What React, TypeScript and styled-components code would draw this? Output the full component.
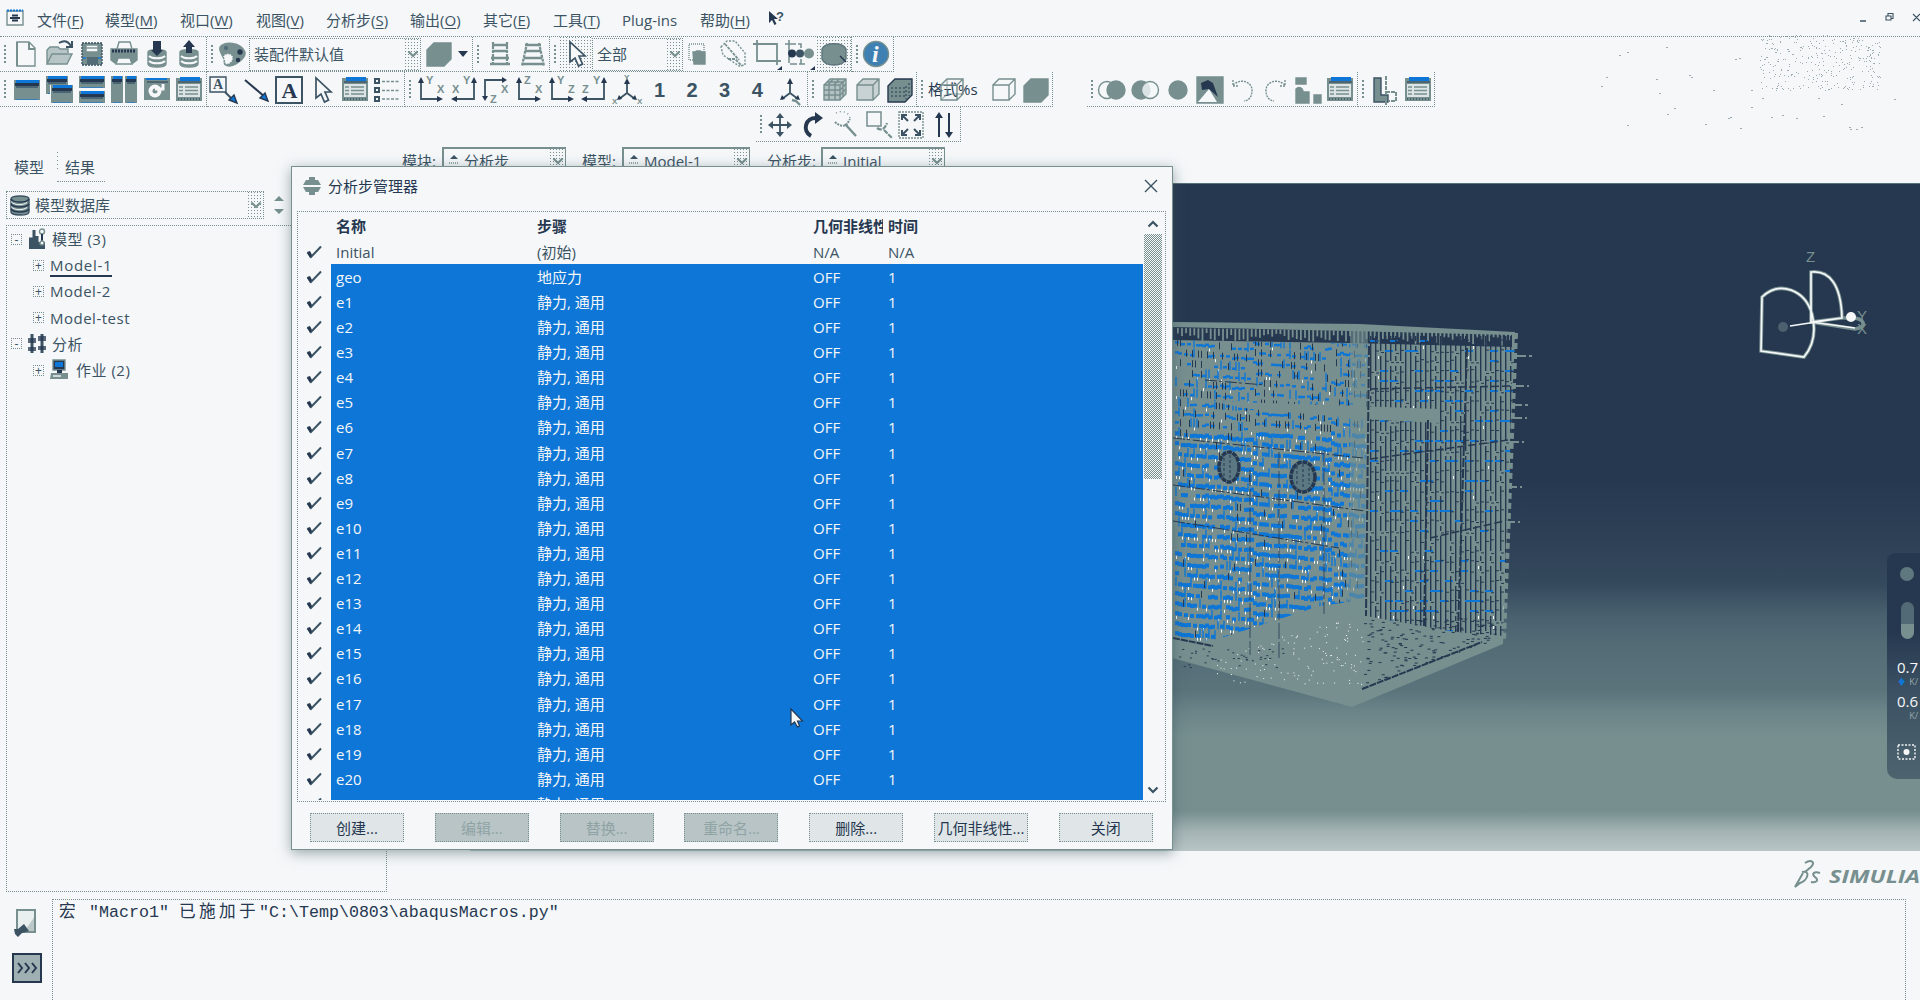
import React from 'react';
import styled, { createGlobalStyle, css } from 'styled-components';

const G = '#778f8f';
const N = '#263850';
const B = '#0d76d6';
const W = '#f5f7f9';
const T = '#3b5363';

const checker = css`
  background: repeating-conic-gradient(${G} 0 25%, ${W} 0 50%) 0 0 / 2px 2px;
`;
const sparse = css`
  background: radial-gradient(circle at 0.5px 0.5px, ${G} 0.6px, transparent 0.8px) 0 0 / 3px 3px, ${W};
`;

const Global = createGlobalStyle`
  html, body { margin: 0; padding: 0; background: ${W}; overflow: hidden; }
  * { box-sizing: border-box; }
`;

const Shell = styled.div`
  position: relative;
  display: flex;
  flex-direction: column;
  width: 1920px;
  height: 1000px;
  overflow: hidden;
  background: ${W};
  color: ${T};
  font: 15px/20px 'Open Sans', 'Noto Sans CJK SC', sans-serif;
  white-space: nowrap;
`;

/* ---------- menu ---------- */
const MenuBar = styled.div`
  display: flex;
  align-items: center;
  height: 37px;
  padding: 4px 0 0 6px;
  border-bottom: 1px dotted ${G};
`;
const MenuItem = styled.div<{ $w: number }>`
  flex: 0 0 ${p => p.$w}px;
  u { text-underline-offset: 2px; text-decoration-thickness: 1px; }
`;
const WindowButtons = styled.div`
  display: flex;
  margin: -4px 0 0 auto;
`;
const Speckles = styled.div`
  position: absolute;
  left: 1590px;
  top: 30px;
  opacity: 0.7;
`;

/* ---------- toolbars ---------- */
const ToolRow = styled.div<{ $left?: number; $drop?: number }>`
  display: flex;
  height: 35px;
  padding-left: ${p => p.$left || 0}px;
  svg, span { position: relative; top: ${p => p.$drop || 0}px; }
`;
const Group = styled.div<{ $w: number; $gap?: number }>`
  display: flex;
  align-items: center;
  flex: 0 0 ${p => p.$w}px;
  margin-left: ${p => p.$gap || 0}px;
  border-right: 1px dotted ${G};
  border-bottom: 1px dotted ${G};
`;
const Grip = styled.div<{ $w: number }>`
  flex: 0 0 ${p => p.$w}px;
  height: 18px;
  &::before {
    content: '';
    display: block;
    width: 3px;
    height: 100%;
    margin-left: 4px;
    background: radial-gradient(circle at 1px 1px, ${G} 0.9px, transparent 1.1px) 0 0 / 3px 4px;
  }
`;
const Slot = styled.div<{ $w?: number; $pressed?: boolean }>`
  display: flex;
  align-items: center;
  justify-content: center;
  flex: 0 0 ${p => p.$w || 32.4}px;
  height: 100%;
  ${p => p.$pressed && sparse}
  svg { flex: none; }
`;
const Digit = styled.span`
  font: bold 20px/20px 'Liberation Sans', sans-serif;
  color: ${T};
`;
const FormatLabel = styled.div`
  display: flex;
  align-items: center;
  flex: 0 0 61px;
  padding-left: 2px;
  color: ${N};
  svg { margin-left: -42px; flex: none; }
`;

const Combo = styled.div<{ $w: number; $h?: number; $solid?: boolean; $gap?: number }>`
  display: flex;
  align-items: center;
  flex: 0 0 ${p => p.$w}px;
  width: ${p => p.$w}px;
  height: ${p => p.$h || 33}px;
  margin-left: ${p => p.$gap || 0}px;
  padding-left: 4px;
  border: 1px dotted ${G};
  ${p => p.$solid && css`border: 2px solid ${G}; border-right-width: 1px;`}
`;
const ComboText = styled.span`
  flex: 1;
`;
const ComboArrow = styled.span`
  display: flex;
  align-items: center;
  justify-content: center;
  width: 15px;
  height: 100%;
  ${sparse}
`;

/* ---------- main ---------- */
const Main = styled.div`
  display: flex;
  flex: 0 0 757px;
`;
const Side = styled.div`
  display: flex;
  flex-direction: column;
  width: 387px;
  padding-left: 6px;
`;
const Tabs = styled.div`
  display: flex;
  height: 40px;
`;
const Tab = styled.div<{ $idle?: boolean }>`
  width: ${p => (p.$idle ? 48 : 51)}px;
  padding: 15px 0 0 8px;
  ${p => p.$idle && css`
    border-bottom: 1px dotted ${G};
    background: repeating-linear-gradient(${G} 0 1px, transparent 1px 4px) 0 10px / 1px 17px no-repeat;
  `}
`;
const DbRow = styled.div`
  display: flex;
  align-items: center;
  gap: 9px;
  margin-top: 9px;
`;
const DbIcon = styled.span`
  display: flex;
  margin-left: -2px;
  padding-right: 4px;
`;
const Tree = styled.div`
  flex: 0 0 667px;
  margin-top: 6px;
  padding: 0 0 0 3px;
  border: 1px dotted ${G};
`;
const Node = styled.div<{ $child?: boolean }>`
  display: flex;
  align-items: center;
  height: 26.2px;
  padding-left: ${p => (p.$child ? 23 : 1)}px;
  gap: 6px;
`;
const Expander = styled.span`
  display: flex;
  align-items: center;
  justify-content: center;
  width: 11px;
  height: 11px;
  border: 1px dotted ${G};
  color: ${T};
  font-size: 12px;
  line-height: 9px;
`;
const NodeText = styled.span<{ $current?: boolean }>`
  letter-spacing: ${p => (p.$current ? 0.7 : 0.5)}px;
  line-height: 20px;
  ${p => p.$current && css`box-shadow: 0 2px 0 ${N};`}
`;

const Stage = styled.div`
  display: flex;
  flex-direction: column;
  flex: 1;
`;
const Context = styled.div`
  display: flex;
  height: 41px;
  padding: 5px 0 0 15px;
`;
const ContextLabel = styled.span<{ $w: number; $indent?: number }>`
  flex: 0 0 ${p => p.$w}px;
  padding: 4px 0 0 ${p => p.$indent || 0}px;
`;
const Stepper = styled.span`
  width: 12px;
  margin-right: 4px;
  display: flex;
`;
const Viewport = styled.div`
  position: relative;
  display: flex;
  justify-content: flex-end;
  height: 668px;
  margin-left: 83px;
  border-top: 1px solid #5a7079;
  background: linear-gradient(${N} 0, ${N} 44%, #2e4157 54%, #35495c 60%, #4a6270 65%, #536b75 69%, #5b747c 76%, #6b8488 79%, ${G} 83%, ${G} 94%, #a3b3b4 97%, #b9c5c6 100%);
  svg { flex: none; }
`;
const Monitor = styled.div`
  position: absolute;
  right: 0;
  top: 369px;
  display: flex;
  flex-direction: column;
  align-items: flex-end;
  width: 33px;
  height: 226px;
  padding: 14px 6px 0 0;
  border-radius: 8px 0 0 10px;
  background: linear-gradient(#263850 35%, #3b5062 60%, #4d646f);
  color: ${W};
  > svg { margin: 17px -3px 0 0; }
`;
const Knob = styled.div`
  width: 14px;
  height: 14px;
  border-radius: 50%;
  background: #5f7880;
`;
const Pill = styled.div`
  width: 13px;
  height: 37px;
  margin: 21px 0 19px;
  border-radius: 7px;
  background: linear-gradient(#526a75 60%, ${G} 60%);
`;
const Rate = styled.div`
  height: 34px;
  margin-right: -4px;
  font-size: 15px;
  line-height: 19px;
  small {
    display: block;
    color: #94a8aa;
    font-size: 9px;
    line-height: 9px;
    text-align: right;
  }
  b { margin-right: 3px; color: ${B}; }
`;
const Brand = styled.div`
  display: flex;
  align-items: center;
  justify-content: flex-end;
  height: 45px;
`;

/* ---------- message area ---------- */
const Messages = styled.div`
  display: flex;
  flex: 1;
`;
const MessageTabs = styled.div`
  display: flex;
  flex-direction: column;
  align-items: center;
  gap: 14px;
  width: 52px;
  padding: 9px 0 0 2px;
`;
const MessageBox = styled.div`
  width: 1854px;
  padding: 3px 0 0 6px;
  border: 1px dotted ${G};
  border-bottom: 0;
  color: ${N};
  font: 16.67px/20px 'Liberation Mono', 'Noto Sans CJK SC', monospace;
  white-space: pre;
`;
const Han = styled.span`
  letter-spacing: 3.33px;
`;

/* ---------- dialog ---------- */
const Dialog = styled.div`
  position: absolute;
  left: 291px;
  top: 166px;
  display: flex;
  flex-direction: column;
  width: 882px;
  height: 684px;
  padding-left: 5px;
  border: 1px solid ${G};
  background: ${W};
  box-shadow: 0 3px 12px rgba(60, 85, 95, 0.5);
`;
const TitleBar = styled.div`
  display: flex;
  align-items: center;
  height: 44px;
  padding: 0 14px 7px 6px;
  gap: 7px;
  color: ${N};
  svg:last-child { margin-left: auto; }
`;
const ListBox = styled.div`
  display: flex;
  width: 869px;
  height: 591px;
  padding: 1px 2px 1px 0;
  border: 1px dotted ${G};
`;
const Rows = styled.div`
  width: 845px;
  overflow: hidden;
`;
const Row = styled.div<{ $kind?: 'head' | 'plain' }>`
  display: grid;
  grid-template-columns: 33px 206px 276px 75px 1fr;
  align-items: center;
  height: ${p => (p.$kind ? 25.7 : 25.1)}px;
  background: ${p => (p.$kind ? 'none' : `linear-gradient(to right, transparent 33px, ${B} 33px)`)};
  color: ${p => (p.$kind ? T : W)};
  ${p => p.$kind === 'head' && css`font-weight: bold; color: ${N};`}
`;
const Cell = styled.span<{ $inset?: boolean }>`
  padding-left: ${p => (p.$inset ? 5 : 0)}px;
`;
const GeomHead = styled.span`
  width: 70px;
  overflow: hidden;
`;
const CheckCell = styled.span`
  display: flex;
  justify-content: center;
  padding-right: 2px;
`;
const Scroll = styled.div`
  display: flex;
  flex-direction: column;
  align-items: center;
  width: 20px;
  padding: 7px 0 6px;
  svg:last-child { margin-top: auto; }
`;
const Thumb = styled.div`
  width: 18px;
  height: 245px;
  margin-top: 6px;
  ${checker}
`;
const Buttons = styled.div`
  display: flex;
  gap: 30.8px;
  padding: 11px 0 0 13px;
`;
const Button = styled.button<{ $off?: boolean }>`
  width: 94px;
  flex: none;
  height: 29px;
  padding: 0;
  border: 1px dotted ${G};
  font: 15px/20px 'Open Sans', 'Noto Sans CJK SC', sans-serif;
  color: ${p => (p.$off ? '#8fa3a4' : N)};
  ${p => (p.$off ? css`background: #b8c4c6;` : css`background: #e0e6e8;`)}
`;
const Pointer = styled.div`
  position: absolute;
  left: 790px;
  top: 708px;
`;

/* ---------- icons ---------- */
type P = { children: React.ReactNode; w?: number; h?: number };
const I = ({ children, w = 32, h = 32 }: P) => (
  <svg width={w} height={h} viewBox={`0 0 ${w} ${h}`} fill="none" stroke={G} strokeWidth="1.4" overflow="visible">{children}</svg>
);
const Chevron = ({ up, dark }: { up?: boolean; dark?: boolean }) => (
  <I w={12} h={8}><path d={up ? 'M1.5 6.5 6 2l4.5 4.5' : 'M1.5 1.5 6 6l4.5-4.5'} stroke={dark ? T : G} strokeWidth="2.2" /></I>
);
const FormIcon = () => (
  <I><rect x="3" y="4" width="26" height="23" fill={G} stroke="none" /><path d="M7 3h20v4H7z" fill={B} stroke="none" /><path d="M5 8h23" stroke={T} />
    <path d="M5 10h22v13H5z" fill="#dde4e6" stroke="none" /><path d="M6 13h4M12 13h13M6 16.500h4M12 16.500h13M6 20h4M12 20h13" stroke={G} /><path d="M5 25h22" stroke={T} strokeDasharray="1 2" /></I>
);
const WinShape = ({ x, y, w, h }: { x: number; y: number; w: number; h: number }) => (
  <g stroke="none"><rect x={x} y={y} width={w} height={h} fill={G} /><rect x={x + 2} y={y} width={w - 3} height={3} fill={B} /><rect x={x + 1} y={y + 3} width={w - 2} height={3} fill={N} /><rect x={x + 2} y={y + 6} width={w - 4} height={2} fill="#4a6573" /><rect x={x + 2} y={y + h - 1} width={w - 4} height={1} fill={B} opacity="0.6" /></g>
);
const CubeWire = ({ fill = 'none', mesh }: { fill?: string; mesh?: boolean }) => (
  <I><path d="M5 11h16v15H5zM5 11l6-6h16v15l-6 6M21 11l6-6" fill={fill} />
    {mesh && <path d="M10 11v15M16 11v15M5 16h16M5 21h16M8 8h16M14 5l-5 6M20 5l-5 6M24 8v15M21 16l6-6M21 21l6-6" />}
    {!mesh && fill === 'none' && <path d="M11 5v15h16M5 26l6-6" opacity=".55" />}</I>
);
const SolidCube = () => (
  <I><path d="M5 11h16v15H5zM5 11l6-6h16v15l-6 6M21 11l6-6" fill={W} /></I>
);
const Solid = ({ dark }: { dark?: boolean }) => (
  <I><path d="M4 12 11 5h17v16l-7 7H4z" fill={G} stroke={dark ? N : G} />{dark && <path d="M7 14h14M7 18h14M7 22h14M22 12v13M25 9v13" stroke={N} strokeDasharray="2 2" strokeWidth="1" />}</I>
);
const Csys = ({ a, b, flip, down }: { a: string; b: string; flip?: boolean; down?: boolean }) => (
  <I>
    <path d={down ? 'M5 25V6h19' : flip ? 'M26 6v19H8' : 'M6 6v19h18'} stroke={T} strokeWidth="1.8" />
    <g fill={N} stroke="none">
      <path d={down ? 'M2 22h6l-3 5z' : flip ? 'M23 9h6l-3-6z' : 'M3 9h6L6 3z'} />
      <path d={down ? 'M22 3v6l5-3z' : flip ? 'M9 22v6l-6-3z' : 'M22 22v6l6-3z'} />
    </g>
    <g fill={G} stroke="none" fontFamily="Liberation Sans" fontWeight="bold" fontSize="11">
      <text x={down ? 21 : flip ? 15 : 11} y={down ? 19 : 10}>{a}</text>
      <text x={down ? 10 : flip ? 4 : 22} y={down ? 29 : 19}>{b}</text>
    </g>
  </I>
);
const Triad = ({ letters }: { letters?: boolean }) => (
  <I><path d="M16 8v11L8 25M16 19l8 6" stroke={T} strokeWidth="1.8" /><g fill={N} stroke="none"><path d="M13 10h6l-3-6z" /><path d="m6 26 2-5 3 4zM26 26l-5-1 3-4z" /></g>
    {letters ? <g fill={G} stroke="none" fontFamily="Liberation Sans" fontWeight="bold" fontSize="8"><text x="13" y="6">Y</text><text x="1" y="30">X</text><text x="26" y="30">X</text></g>
      : <path d="m18 26 4 1 4 4" strokeWidth="2.4" />}</I>
);
const Cursor = () => (
  <I><path d="M10 4v20l5-4 3.5 8 4-2-3.5-8h6z" fill={W} stroke={T} strokeWidth="1.7" /></I>
);
const Stack = ({ up }: { up?: boolean }) => (
  <I><path d="M7 14c0-3 18-3 18 0v12c0 4-18 4-18 0z" fill={G} /><path d="M8 18c3 3 13 3 16 0M8 23c3 3 13 3 16 0" stroke={W} strokeWidth="2" />
    <path d={up ? 'M13 15V9h-3l6-7 6 7h-3v6z' : 'M12 3h8v9h2l-6 6-6-6h2z'} fill={N} stroke="none" /></I>
);
const Ladder = ({ skew }: { skew?: boolean }) => (
  <I><path d={skew ? 'M10 5 5 28M22 5l5 23' : 'M9 4v24M23 4v24'} strokeWidth="2.2" strokeDasharray="3 1" /><path d="M8 7h16M8 13h16M7 20h18M6 26h20" strokeWidth="2.4" /></I>
);

const NewIcon = () => <I><path d="M6 4h12l6 6v18H6z" /><path d="M6 4v24M18 4v7h6" strokeWidth="2" /></I>;
const OpenIcon = () => <I><path d="M3 26V12l3-3h8l2 2h8v4M3 26l5-10h20l-5 10z" fill="#b8c5c7" /><path d="M15 5c5-3 9-2 12 3M28 3v6h-6" stroke={T} strokeWidth="2" /></I>;
const SaveIcon = () => <I><path d="M6 5h20v22H6z" fill={G} stroke={T} strokeDasharray="2 1" /><path d="M10 7h12v7H10z" fill={W} /><path d="M10 10h12" /><path d="M11 19h11v7H11z" fill="#526c77" stroke="none" /><path d="M7 20h3M22 20h3" stroke={B} /></I>;
const PrintIcon = () => <I><path d="M9 11 11 4h11l2 7" /><path d="M3 11h26v11l-4 3H7l-4-3z" fill={G} /><path d="M4 13h24" stroke={N} strokeWidth="3" strokeDasharray="2 1" /><path d="M10 20h12l2 6H8z" fill={W} /></I>;
const PaletteIcon = () => <I><path d="M4 9c3-6 21-5 25 5 1 5-4 9-9 12-7 4-14 1-11-3 1-3-2-3-3-6s-3-4-2-8z" fill={G} /><circle cx="24" cy="14" r="2.700" fill={N} stroke="none" /><circle cx="22" cy="22" r="2.200" fill={N} stroke="none" /><circle cx="10" cy="10" r="2.2" fill="#54707a" stroke="none" /><path d="M7 18c3-4 9-3 10 1s-4 9-8 7z" fill={W} strokeDasharray="2 1" /></I>;
const InfoIcon = () => <I><circle cx="16" cy="16" r="12.5" fill="#3e80b2" stroke={G} /><text x="12" y="24" fontFamily="Liberation Serif" fontStyle="italic" fontWeight="bold" fontSize="24" fill={W} stroke="none">i</text></I>;
const ShapeA = () => <I><path d="M6 6h15v16H6z" strokeDasharray="1 1" /><path d="M10 14h2l2-1h3l2 1h3v12H11z" fill={G} /></I>;
const ShapeB = () => <I><path d="M4 9 10 3h8l10 12v12l-6 1L6 17z" strokeDasharray="2 1.5" /><path d="M11 21h7l7 7M8 6l14 16" strokeDasharray="3 1" strokeWidth="1.8" /></I>;
const RectSel = () => <I><path d="M6 6h20v17H6zM2 6h8M6 2v8M22 23h8M26 19v8" strokeWidth="1.8" /><path d="M31 28v4h-5z" fill={N} stroke="none" /></I>;
const PickSel = () => <I><path d="M5 6h12v20H5zM1 6h8M5 2v8M15 26h6" strokeWidth="1.6" strokeDasharray="7 2" /><circle cx="8" cy="15.500" r="4" fill={N} stroke="none" /><circle cx="16" cy="15.500" r="4" fill={T} stroke="none" /><circle cx="25" cy="15.500" r="5" fill={G} stroke="none" /><path d="M31 28v4h-5z" fill={N} stroke="none" /></I>;
const DrumIcon = () => <I><path d="M4 11c3-7 21-7 24 0v10c-3 8-21 8-24 0z" fill={G} stroke="#5d757d" /><path d="m22 18 6 6" stroke={N} /></I>;

const Picture = () => <I><path d="M3 4h26v22H3z" fill={G} stroke="none" /><path d="M5 4h21v2H5z" fill={B} stroke="none" /><path d="M6 8h21" stroke={T} /><circle cx="14" cy="17" r="6.5" fill={W} stroke="none" /><circle cx="14" cy="17" r="2.500" fill={G} stroke="none" /><path d="M14 15h8v-5" stroke={W} strokeWidth="3" /></I>;
const TagA = () => <I><path d="M3 3h16v15H3z" stroke={T} /><text x="6" y="15" fill={T} stroke="none" fontFamily="Liberation Serif" fontWeight="bold" fontSize="14">A</text><path d="m18 18 7 7" stroke={T} strokeWidth="2" /><path d="m30 29-8-3 5-5z" fill={B} stroke={N} /></I>;
const Arrow = () => <I><path d="m5 6 20 17" stroke={N} strokeWidth="2" /><path d="m28 27-8-3 5-5z" fill={B} stroke={N} /></I>;
const BigA = () => <I><path d="M3 3h26v26H3z" stroke={T} strokeWidth="2" /><text x="8.5" y="24" fill={N} stroke="none" fontFamily="Liberation Serif" fontWeight="bold" fontSize="22">A</text></I>;
const Legend = () => <I><path d="M4 5h4v4H4zM4 14h4v4H4zM4 23h4v4H4z" stroke={T} strokeWidth="2" /><path d="M11 7.500h18M11 16.500h18M11 25h18" strokeDasharray="3 1.500" /></I>;

const FourWay = () => <I><path d="M16 6v20M6 16h20" stroke={T} strokeWidth="1.8" /><path d="M12 9h8l-4-5zM12 23h8l-4 5zM9 12v8l-5-4zM23 12v8l5-4z" fill={T} stroke="none" /></I>;
const Rotate = () => <I><path d="M14 27C5 22 8 8 20 9" stroke={N} strokeWidth="4" /><path d="M18 3v12l8-6z" fill={N} stroke="none" /></I>;
const Magnify = () => <I><path d="M6 4c5-3 13-1 14 5" strokeDasharray="1 3" /><path d="M5 13c4 4 9 5 12 2l3-5" strokeDasharray="2 1" strokeWidth="2" /><path d="m15 15 11 12" strokeWidth="2.4" /></I>;
const ZoomBox = () => <I><path d="M5 3h14v14H5z" strokeWidth="1.500" /><path d="M15 19c4 3 8 1 10-5M22 21l8 8" strokeWidth="2.200" strokeDasharray="5 1" /></I>;
const Fit = () => <I><path d="M4 3h24v26H4z" strokeDasharray="2 1" /><path d="m7 11V6h5M20 6h5v5M25 21v5h-5M12 26H7v-5M7 6l6 6M25 6l-6 6M7 26l6-6M25 26l-6-6" stroke={T} strokeWidth="2" /></I>;
const UpDown = () => <I><path d="M11 28V5M21 4v23" stroke={N} strokeWidth="2" /><path d="M7 9h8l-4-6zM17 23h8l-4 6z" fill={N} stroke="none" /></I>;

const Bool = ({ k }: { k: number }) => (
  <I>{k === 0 && <><circle cx="11" cy="16" r="8.500" /><circle cx="20" cy="16" r="9" fill={G} /></>}
    {k === 1 && <><circle cx="12" cy="16" r="9" fill={G} /><circle cx="21" cy="16" r="8.500" fill={W} fillOpacity=".8" /></>}
    {k === 2 && <circle cx="17" cy="16" r="9" fill={G} />}</I>
);
const CutIcon = () => <I><path d="M3 3h26v26H3z" fill={G} /><path d="M4 28 15 15l8 13z" fill={W} stroke="none" /><path d="m7 9 7-3 5 3 5 14-9-8-7 1z" fill={N} stroke="none" /></I>;
const Undo = ({ redo }: { redo?: boolean }) => <I><g transform={redo ? 'translate(32 0) scale(-1 1)' : undefined}><path d="M6 11c9-8 19-2 19 5 0 6-2 10-8 11M6 6v6h6" strokeDasharray="2 1" /></g></I>;
const Blocks = () => <I><path d="M4 4h10v6H4zM4 15c3-3 7-1 7 3h6v11H4zM22 21h7v8h-7z" fill={G} /></I>;
const Parts = () => <I><path d="M4 4h7v17h7v7H4z" fill={G} stroke={T} /><path d="M16 18h10v9h-7M16 2v29" strokeWidth="2" strokeDasharray="4 1" /></I>;

const Check = () => <I w={16} h={14}><path d="M1.500 7.500 5 12 15 1.500" stroke={T} strokeWidth="2" /><path d="m1 7 3-1 2 4-2 3z" fill={N} stroke="none" /></I>;

/* ---------- mesh model ---------- */
const rnd = (a: number, b: number) => {
  const v = Math.sin(a * 127.1 + b * 311.7) * 43758.5453;
  return v - Math.floor(v);
};
const MeshModel = () => {
  const front: React.ReactNode[] = [];
  for (let r = 0; r < 31; r++) {
    for (let c = 0; c < 65; c++) {
      const x = 1175 + c * 3;
      const y = 341 + r * 10 + ((c * 3) % 78) * 0.08;
      const low = r > 8;
      const v = rnd(r, c);
      if (v < (low ? 0.66 : 0.4)) front.push(<rect key={`b${r}-${c}`} x={x} y={y + 2 * rnd(c, 2)} width={4} height={low ? 4 : 2.4} fill={B} />);
      if (v > 0.86) front.push(<rect key={`e${r}-${c}`} x={x} y={y - 4} width={2} height={9} fill={B} opacity=".7" />);
      if (rnd(c, r + 50) < (low ? 0.24 : 0.07)) front.push(<rect key={`w${r}-${c}`} x={x + 1} y={y + 5} width={1} height={3} fill={W} />);
      if (rnd(c + 9, r) < (low ? 0.05 : 0.26)) front.push(<rect key={`n${r}-${c}`} x={x + 2} y={y - 2} width={1} height={7} fill={N} />);
    }
  }
  const side: React.ReactNode[] = [];
  for (let c = 0; c < 30; c++) {
    for (let r = 0; r < 32; r++) {
      const x = 1370 + c * 5;
      const y = 336 + r * 10;
      const v = rnd(c + 70, r + 3);
      side.push(<rect key={`v${c}-${r}`} x={x} y={y} width={1.4} height={v < 0.85 ? 10 : 5} fill={N} />);
      if (v < 0.14) side.push(<rect key={`s${c}-${r}`} x={x} y={y + 4} width={8} height={2} fill={B} />);
      if (v > 0.45) side.push(<rect key={`d${c}-${r}`} x={x + 1} y={y + 7 * v} width={3} height={1} fill={N} />);
      if (v > 0.4 && v < 0.43) side.push(<rect key={`l${c}-${r}`} x={x + 3} y={y} width={1} height={3} fill={W} />);
    }
  }
  const floor: React.ReactNode[] = [];
  for (let i = 0; i < 150; i++) {
    const x = 1215 + 148 * rnd(i, 1);
    const y = 622 + 62 * rnd(i, 2);
    if (y > 660 - (x - 1215) * 0.35) floor.push(<rect key={`f${i}`} x={x} y={y} width={1} height={1} fill={W} />);
  }
  for (let i = 0; i < 260; i++) {
    const x = 1364 + 130 * rnd(i, 5);
    const y = 618 + 70 * rnd(i, 6);
    if (y < 686 - (x - 1364) * 0.36) floor.push(<rect key={`g${i}`} x={x} y={y} width={3} height={1} fill={N} />);
  }
  for (let i = 0; i < 40; i++) {
    floor.push(<rect key={`h${i}`} x={1178 + 110 * rnd(i, 8)} y={648 + 20 * rnd(i, 9)} width={2} height={1} fill={N} />);
  }
  const teeth: React.ReactNode[] = [];
  for (let i = 0; i < 82; i++) {
    const x = 1177 + i * 4.1;
    teeth.push(<rect key={i} x={x} y={328 + i * 0.06} width={1.8} height={4 + 9 * rnd(i, 4)} fill={G} />);
  }
  return (
    <g fill="none">
      <defs>
        <clipPath id="front"><path d="M1175 340 1368 344 1364 600 1320 606 1270 622 1215 640 1175 642z" /></clipPath>
        <clipPath id="side"><path d="M1368 336 1515 336 1504 636 1455 632 1366 616z" /></clipPath>
      </defs>
      <path d="M1175 322 1360 324 1515 332 1503 644 1352 707 1172 658V322z" fill={G} />
      <path d="M1172 327 1350 331 1512 335V347L1350 343 1172 340z" fill={N} />
      {teeth}
      <g clipPath="url(#front)">{front}</g>
      <g clipPath="url(#side)">{side}</g>
      {floor}
      <path d="M1350 330 1368 330 1366 615 1345 615 1350 500z" fill={G} opacity=".6" />
      <path d="M1362 689 1482 642M1173 638l40 8" stroke={N} strokeWidth="2" strokeDasharray="7 1" />
      <path d="M1210 401 1440 409 1440 423 1380 420 1250 409z" fill={G} />
      <path d="M1173 438l190 20M1173 485l192 26M1173 521l166 27M1205 380l60 5" stroke={N} strokeDasharray="12 2 3 3" />
      <path d="M1324 450V614M1279 452V660M1250 470V655" stroke={N} strokeDasharray="16 3" opacity=".8" />
      <path d="M1369 346 1366 616M1467 348 1458 632M1428 420 1424 626" stroke={N} strokeWidth="2" strokeDasharray="9 2" />
      <path d="M1370 459 1508 440M1430 538 1504 521M1370 389 1510 386" stroke={N} strokeWidth="1.500" strokeDasharray="8 3" />
      <g fill="#5c7883" stroke={N} strokeWidth="3.500"><ellipse cx="1229" cy="467" rx="10" ry="15" strokeDasharray="5 .7" /><ellipse cx="1303" cy="477" rx="12" ry="15" strokeDasharray="5 .7" /></g>
      <path d="M1224 458v18M1230 455v24M1297 466v20M1303 464v24M1309 468v16" stroke={N} strokeDasharray="3 2" />
      <path d="M1517 356h15M1515 386h14M1513 405h15M1513 418h14M1510 442h14M1508 487h14M1506 522h14" stroke={G} strokeWidth="2" strokeDasharray="9 3" />
      <path d="M1516 333 1504 640" stroke={G} strokeWidth="4" strokeDasharray="6 4" />
    </g>
  );
};
const AxisTriad = () => (
  <g fill="none">
    <g stroke={G} strokeWidth="3.600">
      <path d="M1761 351 1762 297C1780 280 1805 290 1812 314 1816 330 1814 345 1804 357zM1811 272c18-2 30 12 31 46l-31 4zM1811 322l44 7c12-2 10-9 0-11l-13 0" />
    </g>
    <g stroke={W} strokeWidth="1.700">
      <path d="M1761 351 1762 297C1780 280 1805 290 1812 314 1816 330 1814 345 1804 357zM1811 272c18-2 30 12 31 46l-31 4zM1790 326l52-8M1811 322l44 6" />
    </g>
    <circle cx="1851" cy="317" r="5" fill={W} />
    <circle cx="1783" cy="327" r="5" fill="#4b616f" />
    <g fill={G} fontFamily="Liberation Sans" fontSize="15"><text x="1806" y="262">Z</text><text x="1857" y="321">Y</text><text x="1857" y="334">X</text></g>
  </g>
);

const menus: [string, string, number][] = [
  ['文件', 'F', 68], ['模型', 'M', 75], ['视口', 'W', 76], ['视图', 'V', 70], ['分析步', 'S', 84], ['输出', 'O', 73],
  ['其它', 'E', 70], ['工具', 'T', 69], ['Plug-ins', '', 78], ['帮助', 'H', 67],
];
const steps = ['geo', ...Array.from({ length: 21 }, (_, i) => `e${i + 1}`)];

const ContextCombo = ({ w, gap, text }: { w: number; gap: number; text: string }) => (
  <Combo $w={w} $h={28} $solid $gap={gap}>
    <Stepper><I w={12} h={18}><path d="M2 7h8L6 3z" fill={T} stroke="none" /><path d="M1 11h10M1 15h10" strokeDasharray="1 1" /></I></Stepper>
    <ComboText>{text}</ComboText><ComboArrow><Chevron /></ComboArrow>
  </Combo>
);

export default function App() {
  return (
    <Shell>
      <Global />
      <MenuBar>
        <MenuItem $w={31}><I w={18} h={18}><path d="M1 2h16v14H1z" /><path d="M1 1.500h16" stroke={B} strokeDasharray="2 1" strokeWidth="2" /><path d="M4 9h10M6 6.500h6M6 11.500h6" stroke={N} strokeWidth="2" /></I></MenuItem>
        {menus.map(([t, k, w]) => <MenuItem key={t} $w={w}>{t}{k && <>(<u>{k}</u>)</>}</MenuItem>)}
        <MenuItem $w={20}><I w={20} h={18}><path d="M2 2v12l3-3 2.500 5 2-1L7 10h4z" fill={N} stroke="none" /><text x="9" y="12" fill={T} stroke="none" fontFamily="Liberation Sans" fontWeight="bold" fontSize="13">?</text></I></MenuItem>
        <WindowButtons>
          <I w={66} h={16}><path d="M6 11h6" stroke={T} strokeWidth="1.500" /><path d="M32 6h5v4h-5zM34 6V3.500h5v5h-2M59 4l7 7M66 4l-7 7" stroke={T} strokeWidth="1.100" /></I>
        </WindowButtons>
      </MenuBar>

      <ToolRow>
        <Group $w={207}><Grip $w={11} />{[NewIcon, OpenIcon, SaveIcon, PrintIcon].map((C, i) => <Slot key={i}><C /></Slot>)}<Slot><Stack /></Slot><Slot><Stack up /></Slot></Group>
        <Group $w={266}><Grip $w={9} /><Slot $w={32}><PaletteIcon /></Slot>
          <Combo $w={172} $gap={1}><ComboText>装配件默认值</ComboText><ComboArrow><Chevron /></ComboArrow></Combo>
          <Slot $w={36}><Solid /></Slot><Slot $w={12}><I w={10} h={8}><path d="M0 1h10L5 7z" fill={N} stroke="none" /></I></Slot></Group>
        <Group $w={77}><Grip $w={10} /><Slot $w={33}><Ladder /></Slot><Slot $w={33}><Ladder skew /></Slot></Group>
        <Group $w={300}><Grip $w={10} /><Slot $w={32} $pressed><Cursor /></Slot>
          <Combo $w={91}><ComboText>全部</ComboText><ComboArrow><Chevron /></ComboArrow></Combo>
          <Slot $w={28}><ShapeA /></Slot><Slot $w={36}><ShapeB /></Slot><Slot $w={32}><RectSel /></Slot><Slot $w={34}><PickSel /></Slot><Slot $w={34} $pressed><DrumIcon /></Slot></Group>
        <Group $w={42}><Grip $w={6} /><Slot $w={34}><InfoIcon /></Slot></Group>
      </ToolRow>

      <ToolRow $drop={1}>
        <Group $w={207}><Grip $w={11} />
          <Slot><I><WinShape x={3} y={6} w={26} h={20} /></I></Slot>
          <Slot><I><WinShape x={2} y={2} w={22} h={18} /><path d="M6 11h24v19H6z" fill={W} stroke="none" /><WinShape x={7} y={11} w={22} h={18} /></I></Slot>
          <Slot><I><WinShape x={3} y={2} w={26} h={12} /><WinShape x={3} y={17} w={26} h={12} /></I></Slot>
          <Slot><I><WinShape x={3} y={2} w={12} h={27} /><WinShape x={17} y={2} w={12} h={27} /></I></Slot>
          <Slot><Picture /></Slot><Slot><FormIcon /></Slot>
        </Group>
        <Group $w={198}>{[TagA, Arrow, BigA, Cursor, FormIcon, Legend].map((C, i) => <Slot key={i} $w={32.8}><C /></Slot>)}</Group>
        <Group $w={403}><Grip $w={10} />
          <Slot $w={32.6}><Csys a="Y" b="X" /></Slot><Slot $w={32.6}><Csys a="Y" b="X" flip /></Slot><Slot $w={32.6}><Csys a="X" b="Z" down /></Slot>
          <Slot $w={32.6}><Csys a="Z" b="X" /></Slot><Slot $w={32.6}><Csys a="Y" b="Z" /></Slot><Slot $w={32.6}><Csys a="Y" b="Z" flip /></Slot>
          <Slot $w={32.6}><Triad letters /></Slot>
          {[1, 2, 3, 4].map(n => <Slot key={n} $w={32.6}><Digit>{n}</Digit></Slot>)}
          <Slot $w={32.6}><Triad /></Slot>
        </Group>
        <Group $w={109}><Grip $w={10} /><Slot $w={33}><CubeWire mesh fill="#b5c2c4" /></Slot><Slot $w={33}><CubeWire fill="#c8d2d4" /></Slot><Slot $w={32}><Solid dark /></Slot></Group>
        <Group $w={136}><Grip $w={9} /><FormatLabel>格式%s<CubeWire /></FormatLabel><Slot $w={33}><SolidCube /></Slot><Slot $w={32}><Solid /></Slot></Group>
        <Group $w={271} $gap={34}><Grip $w={9} />
          {[0, 1, 2].map(k => <Slot key={k} $w={32.6}><Bool k={k} /></Slot>)}
          <Slot $w={32.6}><CutIcon /></Slot><Slot $w={32.6}><Undo /></Slot><Slot $w={32.6}><Undo redo /></Slot><Slot $w={32.6}><Blocks /></Slot><Slot $w={32.6}><FormIcon /></Slot>
        </Group>
        <Group $w={77}><Grip $w={11} /><Slot $w={33}><Parts /></Slot><Slot $w={32}><FormIcon /></Slot></Group>
      </ToolRow>

      <ToolRow $left={756} $drop={1}>
        <Group $w={205}><Grip $w={8} />{[FourWay, Rotate, Magnify, ZoomBox, Fit, UpDown].map((C, i) => <Slot key={i} $w={32.7}><C /></Slot>)}</Group>
      </ToolRow>

      <Main>
        <Side>
          <Tabs><Tab>模型</Tab><Tab $idle>结果</Tab></Tabs>
          <DbRow>
            <Combo $w={258} $h={28}>
              <DbIcon><I w={22} h={22}><path d="M2 5c0-4 18-4 18 0v13c0 4-18 4-18 0z" fill={G} stroke={T} /><path d="M2 5c2 4 16 4 18 0M2 10c3 4 15 4 18 0M2 15c3 4 15 4 18 0" stroke={N} strokeWidth="1.600" /><path d="M2 7.500c3 4 12 4 16 1M2 12.500c3 4 12 4 16 1" stroke={W} strokeWidth="1" /></I></DbIcon>
              <ComboText>模型数据库</ComboText><ComboArrow><Chevron /></ComboArrow>
            </Combo>
            <I w={12} h={20}><path d="M1 6h10L6 1zM1 14h10l-5 5z" fill={G} stroke="none" /></I>
          </DbRow>
          <Tree>
            <Node><Expander>-</Expander><I w={18} h={22}><path d="M1 11h5V2M9 17V8" strokeWidth="3" stroke={T} /><path d="M1 10h7v11H1zM8 14h9v7H8z" fill={T} stroke="none" /><circle cx="14" cy="3.500" r="2.500" /><path d="M14 6v12" stroke={N} strokeWidth="2" /><circle cx="14" cy="15" r="2" fill={W} /></I><NodeText>模型 (3)</NodeText></Node>
            <Node $child><Expander>+</Expander><NodeText $current>Model-1</NodeText></Node>
            <Node $child><Expander>+</Expander><NodeText>Model-2</NodeText></Node>
            <Node $child><Expander>+</Expander><NodeText>Model-test</NodeText></Node>
            <Node><Expander>-</Expander><I w={18} h={20}><path d="M4 0v19M14 0v19" stroke={T} strokeWidth="3" /><path d="M0 4h8v5H0zM10 2h8v5h-8zM0 13h8v4H0zM10 12h8v4h-8z" fill={N} stroke="none" opacity=".75" /></I><NodeText>分析</NodeText></Node>
            <Node $child><Expander>+</Expander><I w={20} h={20}><path d="M3 0h12v10H3z" fill={N} stroke={G} /><path d="M5 2h8v5H5z" fill={B} stroke="none" /><path d="M7 10h5v3H7z" fill={N} stroke="none" /><path d="M1 13h17v6H0z" fill={G} stroke="none" /><path d="M3 16h8" stroke={W} /></I><NodeText>作业 (2)</NodeText></Node>
          </Tree>
        </Side>
        <Stage>
          <Context>
            <ContextLabel $w={35}>模块:</ContextLabel><ContextCombo w={124} gap={5} text="分析步" />
            <ContextLabel $w={53} $indent={16}>模型:</ContextLabel><ContextCombo w={128} gap={3} text="Model-1" />
            <ContextLabel $w={68} $indent={17}>分析步:</ContextLabel><ContextCombo w={124} gap={3} text="Initial" />
          </Context>
          <Viewport>
            <svg width="748" height="667" viewBox="1172 184 748 667"><MeshModel /><AxisTriad /></svg>
            <Monitor>
              <Knob /><Pill />
              <Rate>0.7<small><b>♦</b>K/</small></Rate>
              <Rate>0.6<small>K/</small></Rate>
              <I w={20} h={18}><path d="M1 2h17v14H1z" stroke={W} strokeDasharray="2 1.500" /><circle cx="9.500" cy="9" r="3" fill={W} stroke="none" /></I>
            </Monitor>
          </Viewport>
          <Brand>
            <I w={126} h={32}>
              <path d="M11 5c6-4 11-1 6 4l-6 5M8 14C17 12 14 22 6 25L1 29 9 15M26 15c-6-2-9 1-5 4s2 6-4 5" strokeWidth="2" />
              <text x="35" y="25" fill={G} stroke="none" fontFamily="Open Sans" fontStyle="italic" fontWeight="bold" fontSize="17.500" textLength="91" lengthAdjust="spacingAndGlyphs">SIMULIA</text>
            </I>
          </Brand>
        </Stage>
      </Main>

      <Messages>
        <MessageTabs>
          <I w={28} h={30}><path d="M4 2h18v22H4z" fill="#e9eeef" strokeWidth="2" /><path d="M22 8v16H11z" fill={G} stroke="none" opacity=".4" /><path d="M1 21h4l6-5 5 7-7 2-4 4-3-3z" fill={T} stroke="none" /></I>
          <I w={32} h={32}><path d="M2 2h28v28H2z" fill="#9fb0b2" stroke={N} strokeWidth="2" /><path d="m7 11 4 5-4 5M14 11l4 5-4 5M21 11l4 5-4 5" stroke={N} strokeWidth="2" /></I>
        </MessageTabs>
        <MessageBox><Han>宏</Han> "Macro1" <Han>已施加于</Han>"C:\Temp\0803\abaqusMacros.py"</MessageBox>
      </Messages>

      <Speckles>
        <I w={320} h={110}>
          {Array.from({ length: 330 }, (_, i) => (
            <rect key={i} x={Math.round(170 + 120 * rnd(i, 21))} y={Math.round(4 + 56 * rnd(i, 22))} width="1" height="1" fill={G} stroke="none" />
          ))}
          {Array.from({ length: 40 }, (_, i) => (
            <rect key={`t${i}`} x={Math.round(10 + 300 * rnd(i, 31))} y={Math.round(10 + 90 * rnd(i, 32))} width="2" height="1" fill={G} stroke="none" />
          ))}
        </I>
      </Speckles>

      <Dialog>
        <TitleBar>
          <I w={18} h={18}><path d="M6 0h6v3h3l3 5H0l3-5h3zM0 10h18l-3 5h-3v3H6v-3H3z" fill={G} stroke="none" /></I>
          分析步管理器
          <I w={14} h={14}><path d="m1 1 12 12M13 1 1 13" stroke={T} /></I>
        </TitleBar>
        <ListBox>
          <Rows>
            <Row $kind="head"><span /><Cell $inset>名称</Cell><Cell>步骤</Cell><GeomHead>几何非线性</GeomHead><Cell>时间</Cell></Row>
            <Row $kind="plain"><CheckCell><Check /></CheckCell><Cell $inset>Initial</Cell><Cell>(初始)</Cell><Cell>N/A</Cell><Cell>N/A</Cell></Row>
            {steps.map(s => (
              <Row key={s}><CheckCell><Check /></CheckCell><Cell $inset>{s}</Cell><Cell>{s === 'geo' ? '地应力' : '静力, 通用'}</Cell><Cell>OFF</Cell><Cell>1</Cell></Row>
            ))}
          </Rows>
          <Scroll><Chevron up dark /><Thumb /><Chevron dark /></Scroll>
        </ListBox>
        <Buttons>
          <Button>创建...</Button><Button $off>编辑...</Button><Button $off>替换...</Button><Button $off>重命名...</Button>
          <Button>删除...</Button><Button>几何非线性...</Button><Button>关闭</Button>
        </Buttons>
      </Dialog>
      <Pointer><I w={14} h={20}><path d="M1 1v16l3.500-3 3 5 2-1-2-5h5z" fill={W} stroke={N} strokeWidth="1.200" /></I></Pointer>
    </Shell>
  );
}
